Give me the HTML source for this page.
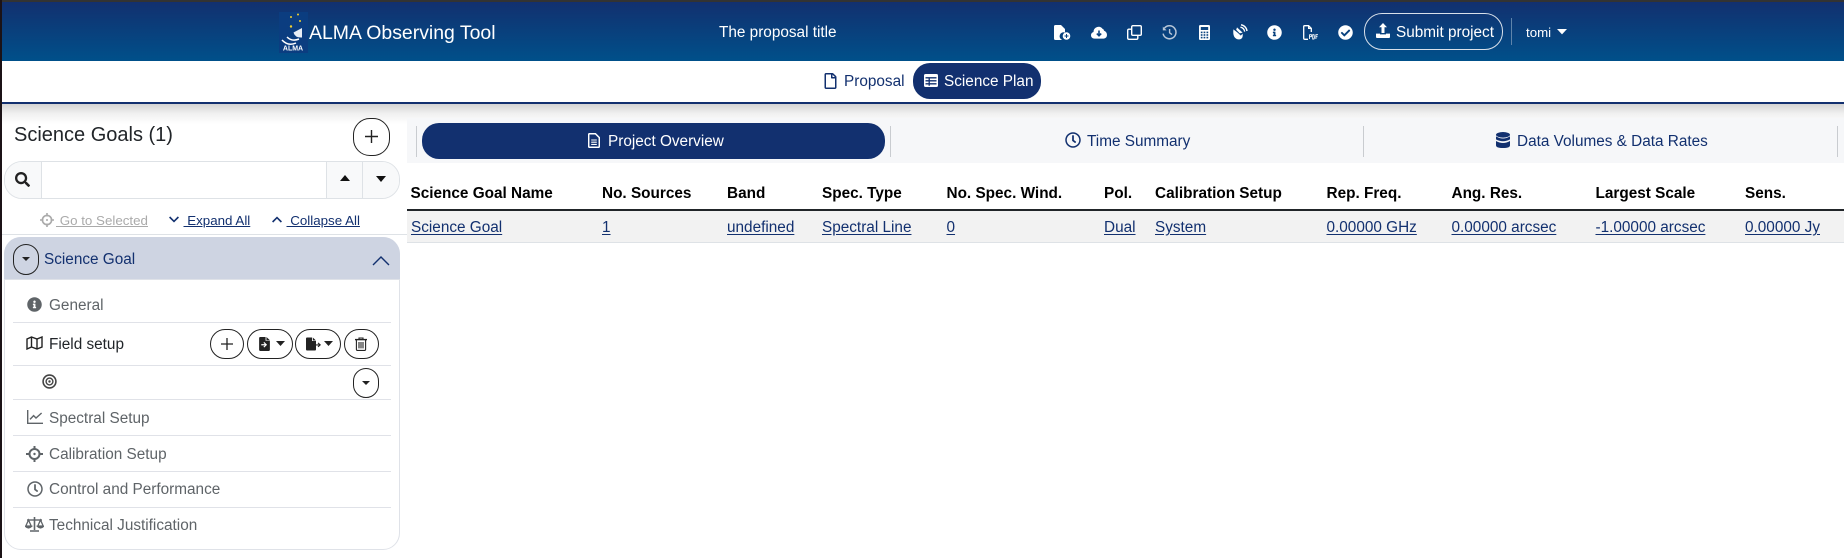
<!DOCTYPE html>
<html>
<head>
<meta charset="utf-8">
<style>
html,body{margin:0;padding:0;width:1844px;height:558px;overflow:hidden;background:#fff;font-family:"Liberation Sans",sans-serif;}
#p{position:relative;width:1844px;height:558px;overflow:hidden;background:#fff;}
.a{position:absolute;}
.t{position:absolute;white-space:nowrap;line-height:20px;font-size:15.33px;}
.w{color:#fff;}
.b{color:#12306f;}
.g{color:#5f6468;}
.th{font-weight:bold;color:#000;top:184px;}
.td{color:#12306f;top:218px;text-decoration:underline;text-underline-offset:2px;}
.l{font-size:13.35px;color:#12306f;top:211px;text-decoration:underline;}
.sep{position:absolute;left:13px;width:378px;height:1px;background:#e0e2e8;}
.btn{position:absolute;border:1px solid #222;border-radius:15px;box-sizing:border-box;background:#fff;}
svg{position:absolute;display:block;}
</style>
</head>
<body>
<div id="p">
<!-- header -->
<div class="a" style="left:0;top:2px;width:1844px;height:59px;background:linear-gradient(180deg,#12306f 0%,#00508a 100%);"></div>
<div class="a" style="left:0;top:0;width:1844px;height:2px;background:#333;"></div>

<!-- logo -->
<svg style="left:279px;top:12px" width="29" height="41" viewBox="0 0 29 41">
<rect width="29" height="41" fill="#0b3d80"/>
<circle cx="12" cy="5" r="1" fill="#f0d030"/><circle cx="19" cy="2.500" r="1" fill="#f0d030"/>
<circle cx="21" cy="9" r="1" fill="#f0d030"/><circle cx="12" cy="14.500" r="1.200" fill="#f0d030"/>
<path d="M23 16 L14.500 20.500 Q16 26 23 25.500 Z" fill="#e8eef6"/>
<path d="M8 25 Q13 30 20 27" stroke="#fff" stroke-width="1.500" fill="none"/>
<path d="M3 28 Q9 34.500 17 31" stroke="#fff" stroke-width="1.500" fill="none"/>
<text x="14" y="38.500" font-family="Liberation Sans" font-size="7" font-weight="bold" fill="#fff" text-anchor="middle">ALMA</text>
</svg>
<div class="t w" style="left:309px;top:22px;font-size:19.45px;line-height:22px;">ALMA Observing Tool</div>
<div class="t w" style="left:719px;top:23px;">The proposal title</div>

<!-- header icons -->
<svg style="left:1054px;top:25px" width="17" height="15" viewBox="0 0 17 15">
<path d="M0 1.500Q0 0 1.500 0H7L11 4V7.500A4 4 0 0 0 8.200 15H1.500Q0 15 0 13.500Z" fill="#fff"/>
<circle cx="12.500" cy="11" r="3.800" fill="#fff"/><path d="M10.500 11H14.500M12.500 9V13" stroke="#0c4480" stroke-width="1"/>
</svg>
<svg style="left:1091px;top:26px" width="16" height="13" viewBox="0 0 16 13">
<path d="M3.600 12.600Q0 12.400 0 9.200Q0 6.800 2.500 6Q2.600 2.200 6.200 1Q9.600 0 11.700 3Q12.600 2.800 13 4.600Q16 6 16 9Q15.800 12.400 12.600 12.600Z" fill="#fff"/>
<path d="M8 4.500V9.500M5.800 7.600L8 9.800L10.200 7.600" stroke="#0c4480" stroke-width="1.600" fill="none"/>
</svg>
<svg style="left:1127px;top:25px" width="15" height="15" viewBox="0 0 15 15" fill="none" stroke="#fff" stroke-width="1.400">
<rect x="4.700" y="0.700" width="9.600" height="9.600" rx="1.200"/>
<path d="M4.200 4.200H2Q0.700 4.200 0.700 5.500V13Q0.700 14.300 2 14.300H9.500Q10.800 14.300 10.800 13V10.800"/>
</svg>
<svg style="left:1162px;top:25px" width="15" height="15" viewBox="0 0 15 15" fill="none" stroke="#b8c6d8" stroke-width="1.500">
<path d="M2.400 3.200A6.500 6.500 0 1 1 1.100 8.600"/><path d="M0.800 1.600L4.600 5.400H0.800Z" fill="#b8c6d8" stroke="none"/>
<path d="M7.600 4V7.800L10 9.600" stroke-width="1.400"/>
</svg>
<svg style="left:1199px;top:25px" width="11" height="15" viewBox="0 0 11 15">
<rect width="11" height="15" rx="1.400" fill="#fff"/>
<rect x="1.800" y="2" width="7.400" height="3" fill="#0c4480"/>
<g fill="#0c4480"><rect x="1.800" y="6.600" width="1.700" height="1.600"/><rect x="4.600" y="6.600" width="1.700" height="1.600"/><rect x="7.500" y="6.600" width="1.700" height="1.600"/><rect x="1.800" y="9.200" width="1.700" height="1.600"/><rect x="4.600" y="9.200" width="1.700" height="1.600"/><rect x="7.500" y="9.200" width="1.700" height="1.600"/><rect x="1.800" y="11.800" width="1.700" height="1.600"/><rect x="4.600" y="11.800" width="1.700" height="1.600"/><rect x="7.500" y="11.800" width="1.700" height="1.600"/></g>
</svg>
<svg style="left:1232px;top:24px" width="16" height="16" viewBox="0 0 16 16">
<path d="M1.400 5.400L5.600 8.600L8.800 11.600L10.600 9.600Q11.600 15.600 6 15.400Q0.400 14.200 1.400 5.400Z" fill="#fff"/>
<path d="M5 3.400L10.600 8.600L7.800 9.400L4.200 5.800Z" fill="#fff"/>
<path d="M8.400 3.200A4.600 4.600 0 0 1 12.600 7.600M9 0.800A7 7 0 0 1 15 7" stroke="#fff" stroke-width="1.400" fill="none"/>
</svg>
<svg style="left:1267px;top:25px" width="15" height="15" viewBox="0 0 512 512">
<path fill="#fff" d="M256 8C119.043 8 8 119.083 8 256c0 136.997 111.043 248 248 248s248-111.003 248-248C504 119.083 392.957 8 256 8zm0 110c23.196 0 42 18.804 42 42s-18.804 42-42 42-42-18.804-42-42 18.804-42 42-42zm56 254c0 6.627-5.373 12-12 12h-88c-6.627 0-12-5.373-12-12v-24c0-6.627 5.373-12 12-12h12v-64h-12c-6.627 0-12-5.373-12-12v-24c0-6.627 5.373-12 12-12h64c6.627 0 12 5.373 12 12v100h12c6.627 0 12 5.373 12 12v24z"/>
</svg>
<svg style="left:1303px;top:25px" width="15" height="15" viewBox="0 0 15 15">
<path d="M0.700 1.700Q0.700 0.700 1.700 0.700H5.600L8.300 3.400V7M0.700 1.700V13.300Q0.700 14.300 1.700 14.300H5" stroke="#fff" stroke-width="1.300" fill="none"/>
<path d="M5.600 0.700V3.400H8.300" stroke="#fff" stroke-width="1.200" fill="none"/>
<path d="M6.500 9.500V14M6.500 9.700H8.400V11.700H6.500M9.700 9.700V14H11Q11.800 13 11 9.700ZM12.900 14V9.700H15M12.900 11.700H14.500" stroke="#fff" stroke-width=".9" fill="none"/>
</svg>
<svg style="left:1338px;top:25px" width="15" height="15" viewBox="0 0 512 512">
<path fill="#fff" d="M504 256c0 136.967-111.033 248-248 248S8 392.967 8 256 119.033 8 256 8s248 111.033 248 248zM227.314 387.314l184-184c6.248-6.248 6.248-16.379 0-22.627l-22.627-22.627c-6.248-6.249-16.379-6.249-22.628 0L216 308.118l-70.059-70.059c-6.248-6.248-16.379-6.248-22.628 0l-22.627 22.627c-6.248 6.248-6.248 16.379 0 22.627l104 104c6.249 6.249 16.379 6.249 22.628.001z"/>
</svg>

<!-- submit -->
<div class="a" style="left:1364px;top:13px;width:139px;height:37px;box-sizing:border-box;border:1px solid #d8e0ea;border-radius:18px;"></div>
<svg style="left:1376px;top:23px" width="14" height="15" viewBox="0 0 14 15">
<path d="M7 0L11 4.200H8.500V10H5.500V4.200H3Z" fill="#fff"/>
<path d="M0 10.600H4V11.400H10V10.600H14V14Q14 15 13 15H1Q0 15 0 14Z" fill="#fff"/>
</svg>
<div class="t w" style="left:1396px;top:23px;">Submit project</div>
<div class="a" style="left:1511px;top:18px;width:1px;height:27px;background:#5f84ab;"></div>
<div class="t w" style="left:1526px;top:23px;font-size:13.3px;">tomi</div>
<svg style="left:1557px;top:29px" width="10" height="6" viewBox="0 0 10 6"><path d="M0 0H10L5 5.400Z" fill="#fff"/></svg>

<!-- nav -->
<div class="a" style="left:0;top:102px;width:1844px;height:2px;background:#12306f;"></div>
<svg style="left:824px;top:72.500px" width="13" height="16" viewBox="0 0 384 512">
<path fill="#12306f" d="M369.900 97.900L286 14C277 5 264.800-.1 252.100-.1H48C21.500 0 0 21.500 0 48v416c0 26.500 21.500 48 48 48h288c26.500 0 48-21.500 48-48V131.900c0-12.700-5.100-25-14.100-34zM332.100 128H256V51.900l76.100 76.100zM48 464V48h160v104c0 13.300 10.700 24 24 24h104v288H48z"/>
</svg>
<div class="t b" style="left:844px;top:72px;">Proposal</div>
<div class="a" style="left:913px;top:63px;width:128px;height:36px;background:#12306f;border-radius:17px;"></div>
<svg style="left:924px;top:74px" width="14" height="13" viewBox="0 0 14 13">
<rect width="14" height="13" rx="1.600" fill="#fff"/>
<path d="M1.500 3.800H12.500M1.500 6.800H12.500M1.500 9.800H12.500M5.200 3.500V11.800" stroke="#12306f" stroke-width="1.300"/>
</svg>
<div class="t w" style="left:944px;top:72px;">Science Plan</div>

<!-- shadow -->
<div class="a" style="left:0;top:104px;width:1844px;height:20px;background:linear-gradient(180deg,#d4d4d4 0%,#efefef 45%,#fff 100%);"></div>

<!-- left strip -->
<div class="a" style="left:0;top:0;width:2px;height:558px;background:#1b1216;"></div>

<!-- sidebar header -->
<div class="t" style="left:14px;top:123px;font-size:20px;line-height:24px;color:#212529;">Science Goals (1)</div>
<div class="btn" style="left:353px;top:118px;width:37px;height:38px;border-radius:17px;"></div>
<svg style="left:364px;top:129px" width="15" height="15" viewBox="0 0 15 15"><path d="M7.500 1V14M1 7.500H14" stroke="#222" stroke-width="1.400"/></svg>

<!-- search -->
<div class="a" style="left:4px;top:161px;width:396px;height:38px;box-sizing:border-box;border:1px solid #dee2e6;border-radius:18px;background:#fff;overflow:hidden;">
<div class="a" style="left:0;top:0;width:36px;height:36px;background:#f8f9fa;border-right:1px solid #dee2e6;"></div>
<div class="a" style="left:321px;top:0;width:36px;height:36px;background:#f8f9fa;border-left:1px solid #dee2e6;"></div>
<div class="a" style="left:357px;top:0;width:38px;height:36px;background:#f8f9fa;border-left:1px solid #dee2e6;"></div>
</div>
<svg style="left:14.500px;top:172px" width="15" height="15" viewBox="0 0 512 512">
<path fill="#222" d="M505 442.700L405.300 343c-4.500-4.500-10.600-7-17-7H372c27.600-35.300 44-79.700 44-128C416 93.100 322.900 0 208 0S0 93.100 0 208s93.100 208 208 208c48.300 0 92.700-16.400 128-44v16.300c0 6.400 2.500 12.500 7 17l99.700 99.700c9.400 9.400 24.600 9.400 33.900 0l28.300-28.300c9.400-9.400 9.400-24.600.1-34zM208 336c-70.700 0-128-57.200-128-128 0-70.700 57.200-128 128-128 70.700 0 128 57.200 128 128 0 70.700-57.200 128-128 128z"/>
</svg>
<svg style="left:340px;top:175px" width="10" height="6" viewBox="0 0 10 6"><path d="M0 6H10L5 0Z" fill="#111"/></svg>
<svg style="left:376px;top:176px" width="10" height="6" viewBox="0 0 10 6"><path d="M0 0H10L5 6Z" fill="#111"/></svg>

<!-- links -->
<svg style="left:40px;top:213px" width="14" height="14" viewBox="0 0 14 14" fill="none" stroke="#aaa" stroke-width="1.600"><circle cx="7" cy="7" r="4.600"/><circle cx="7" cy="7" r="1" fill="#aaa" stroke="none"/><path d="M7 0V3.500M7 10.500V14M0 7H3.500M10.500 7H14"/></svg>
<div class="t l" style="left:56px;color:#aaa;">&nbsp;Go to Selected</div>
<svg style="left:169px;top:216px" width="10" height="7" viewBox="0 0 10 7" fill="none" stroke="#12306f" stroke-width="1.600"><path d="M0.600 1L5 5.400L9.400 1"/></svg>
<div class="t l" style="left:183.500px;">&nbsp;Expand All</div>
<svg style="left:272px;top:216px" width="10" height="7" viewBox="0 0 10 7" fill="none" stroke="#12306f" stroke-width="1.600"><path d="M0.600 6L5 1.600L9.400 6"/></svg>
<div class="t l" style="left:286.500px;">&nbsp;Collapse All</div>
<div class="a" style="left:2px;top:234px;width:405px;height:1px;background:#dee2e6;"></div>

<!-- accordion -->
<div class="a" style="left:4px;top:237px;width:396px;height:313px;box-sizing:border-box;border:1px solid #dfe2e8;border-radius:17px;background:#fff;"></div>
<div class="a" style="left:4px;top:237px;width:396px;height:43px;background:#ced4e2;border-radius:17px 17px 0 0;box-sizing:border-box;border-bottom:1px solid #dfe2e8;"></div>
<div class="a" style="left:13px;top:244px;width:26px;height:31px;box-sizing:border-box;border:1px solid #222;border-radius:13px;"></div>
<svg style="left:22px;top:257px" width="8" height="4" viewBox="0 0 8 4"><path d="M0 0H8L4 4Z" fill="#222"/></svg>
<div class="t b" style="left:44px;top:250px;">Science Goal</div>
<svg style="left:372px;top:256px" width="18" height="10" viewBox="0 0 18 10" fill="none" stroke="#12306f" stroke-width="1.400"><path d="M1 9L9 1L17 9"/></svg>

<!-- rows -->
<svg style="left:27px;top:297px" width="15" height="15" viewBox="0 0 512 512">
<path fill="#5f6468" d="M256 8C119.043 8 8 119.083 8 256c0 136.997 111.043 248 248 248s248-111.003 248-248C504 119.083 392.957 8 256 8zm0 110c23.196 0 42 18.804 42 42s-18.804 42-42 42-42-18.804-42-42 18.804-42 42-42zm56 254c0 6.627-5.373 12-12 12h-88c-6.627 0-12-5.373-12-12v-24c0-6.627 5.373-12 12-12h12v-64h-12c-6.627 0-12-5.373-12-12v-24c0-6.627 5.373-12 12-12h64c6.627 0 12 5.373 12 12v100h12c6.627 0 12 5.373 12 12v24z"/>
</svg>
<div class="t g" style="left:49px;top:296px;">General</div>
<div class="sep" style="top:322px;"></div>

<svg style="left:26px;top:336px" width="17" height="14" viewBox="0 0 17 14" fill="none" stroke="#222" stroke-width="1.400"><path d="M1 3L5.500 1L11 3L16 1V11L11 13L5.500 11L1 13ZM5.500 1V11M11 3V13"/></svg>
<div class="t" style="left:49px;top:335px;color:#212529;">Field setup</div>

<div class="btn" style="left:210px;top:329px;width:34px;height:30px;"></div>
<svg style="left:221px;top:338px" width="12" height="12" viewBox="0 0 12 12"><path d="M6 0V12M0 6H12" stroke="#222" stroke-width="1.300"/></svg>
<div class="btn" style="left:247px;top:329px;width:46px;height:30px;"></div>
<svg style="left:259px;top:337px" width="11" height="14" viewBox="0 0 10 13"><path d="M0 1Q0 0 1 0H6V3.500H10V12Q10 13 9 13H1Q0 13 0 12ZM6.800 0L10 3H6.800Z" fill="#222"/><path d="M2 7.200H6M4.400 5L6.600 7.200L4.400 9.400" stroke="#fff" stroke-width="1.100" fill="none"/></svg>
<svg style="left:276px;top:341px" width="9" height="5" viewBox="0 0 9 5"><path d="M0 0H9L4.500 5Z" fill="#222"/></svg>
<div class="btn" style="left:295px;top:329px;width:46px;height:30px;"></div>
<svg style="left:306px;top:337px" width="15" height="14" viewBox="0 0 15 13"><path d="M0 1Q0 0 1 0H6V3.500H10V12Q10 13 9 13H1Q0 13 0 12ZM6.800 0L10 3H6.800Z" fill="#222"/><path d="M10 7.400H13.500M12 5.400L14.200 7.400L12 9.400" stroke="#222" stroke-width="1.100" fill="none"/></svg>
<svg style="left:324px;top:341px" width="9" height="5" viewBox="0 0 9 5"><path d="M0 0H9L4.500 5Z" fill="#222"/></svg>
<div class="btn" style="left:344px;top:329px;width:35px;height:30px;"></div>
<svg style="left:355px;top:337px" width="12" height="14" viewBox="0 0 12 14" fill="none" stroke="#222" stroke-width="1.100"><path d="M0 2.600H12" stroke-width="1.400"/><path d="M4 2.400V1H8V2.400"/><path d="M1.400 3V12.400Q1.400 13.400 2.400 13.400H9.600Q10.600 13.400 10.600 12.400V3"/><path d="M4 5V11.400M6 5V11.400M8 5V11.400"/></svg>
<div class="sep" style="top:365px;"></div>

<svg style="left:42px;top:374px" width="15" height="15" viewBox="0 0 15 15" fill="none" stroke="#444"><circle cx="7.500" cy="7.500" r="6.400" stroke-width="1.600"/><circle cx="7.500" cy="7.500" r="3.400" stroke-width="1.400"/><circle cx="7.500" cy="7.500" r="1.200" fill="#444" stroke="none"/></svg>
<div class="btn" style="left:353px;top:368px;width:26px;height:30px;border-radius:13px;"></div>
<svg style="left:362px;top:381px" width="8" height="4" viewBox="0 0 8 4"><path d="M0 0H8L4 4Z" fill="#222"/></svg>
<div class="sep" style="top:399px;"></div>

<svg style="left:27px;top:410px" width="16" height="14" viewBox="0 0 16 14" fill="none" stroke="#5f6468" stroke-width="1.400"><path d="M0.700 0V13.300H16"/><path d="M3 9.400L6.600 5.600L9 8L14.600 3"/></svg>
<div class="t g" style="left:49px;top:409px;">Spectral Setup</div>
<div class="sep" style="top:435px;"></div>

<svg style="left:26px;top:446px" width="17" height="16" viewBox="0 0 17 16" fill="none" stroke="#5f6468" stroke-width="2"><circle cx="8.500" cy="8" r="5"/><circle cx="8.500" cy="8" r="1.200" fill="#5f6468" stroke="none"/><path d="M8.500 0V3.400M8.500 12.600V16M0 8H3.500M13.500 8H17"/></svg>
<div class="t g" style="left:49px;top:445px;">Calibration Setup</div>
<div class="sep" style="top:471px;"></div>

<svg style="left:27px;top:481px" width="16" height="16" viewBox="0 0 512 512">
<path fill="#5f6468" d="M256 8C119 8 8 119 8 256s111 248 248 248 248-111 248-248S393 8 256 8zm0 448c-110.500 0-200-89.500-200-200S145.500 56 256 56s200 89.500 200 200-89.500 200-200 200zm61.800-104.400l-84.900-61.700c-3.100-2.300-4.900-5.900-4.900-9.700V116c0-6.600 5.400-12 12-12h32c6.600 0 12 5.400 12 12v141.700l66.800 48.600c5.400 3.900 6.500 11.400 2.600 16.800L334.600 349c-3.900 5.300-11.400 6.500-16.800 2.600z"/>
</svg>
<div class="t g" style="left:49px;top:480px;">Control and Performance</div>
<div class="sep" style="top:507px;"></div>

<svg style="left:25px;top:517px" width="19" height="15" viewBox="0 0 19 15" fill="none" stroke="#5f6468" stroke-width="1.300"><path d="M9.500 0V13M5 14H14" stroke-width="1.600"/><path d="M2 3H17" stroke-width="1.400"/><path d="M3.500 3L0.800 9H6.200ZM15.500 3L12.800 9H18.200Z"/><path d="M0.500 9.400Q3.500 12.400 6.500 9.400ZM12.500 9.400Q15.500 12.400 18.500 9.400Z" fill="#5f6468"/></svg>
<div class="t g" style="left:49px;top:516px;">Technical Justification</div>

<!-- tabs -->
<div class="a" style="left:407px;top:118px;width:1437px;height:45px;background:#f6f7f9;"></div>
<div class="a" style="left:416px;top:126px;width:1px;height:31px;background:#c9ccd0;"></div>
<div class="a" style="left:890px;top:126px;width:1px;height:31px;background:#c9ccd0;"></div>
<div class="a" style="left:1363px;top:126px;width:1px;height:31px;background:#c9ccd0;"></div>
<div class="a" style="left:1837px;top:126px;width:1px;height:31px;background:#c9ccd0;"></div>
<div class="a" style="left:422px;top:123px;width:463px;height:36px;background:#12306f;border-radius:17px;"></div>
<svg style="left:588px;top:133px" width="12" height="15" viewBox="0 0 12 15" fill="none" stroke="#fff" stroke-width="1.500"><path d="M0.700 1.600Q0.700 0.700 1.600 0.700H7.400L11.300 4.600V13.400Q11.300 14.300 10.400 14.300H1.600Q0.700 14.300 0.700 13.400Z"/><path d="M3.200 7H8.800M3.200 9.200H8.800M3.200 11.400H8.800" stroke-width="1.100"/></svg>
<div class="t w" style="left:608px;top:132px;">Project Overview</div>
<svg style="left:1065px;top:132px" width="16" height="16" viewBox="0 0 512 512">
<path fill="#12306f" d="M256 8C119 8 8 119 8 256s111 248 248 248 248-111 248-248S393 8 256 8zm0 448c-110.500 0-200-89.500-200-200S145.500 56 256 56s200 89.500 200 200-89.500 200-200 200zm61.800-104.400l-84.900-61.700c-3.100-2.300-4.900-5.900-4.900-9.700V116c0-6.600 5.400-12 12-12h32c6.600 0 12 5.400 12 12v141.700l66.800 48.600c5.400 3.900 6.500 11.400 2.600 16.800L334.600 349c-3.900 5.300-11.400 6.500-16.800 2.600z"/>
</svg>
<div class="t b" style="left:1087px;top:132px;">Time Summary</div>
<svg style="left:1496px;top:132px" width="14" height="16" viewBox="0 0 14 16" fill="#12306f">
<ellipse cx="7" cy="2.800" rx="7" ry="2.800"/><path d="M0 4.400Q7 8.600 14 4.400V7.400Q7 11.200 0 7.400Z"/><path d="M0 9Q7 13 14 9V13.200Q14 16 7 16Q0 16 0 13.200Z"/>
</svg>
<div class="t b" style="left:1517px;top:132px;">Data Volumes &amp; Data Rates</div>

<!-- table -->
<div class="t th" style="left:410.500px;">Science Goal Name</div>
<div class="t th" style="left:602px;">No. Sources</div>
<div class="t th" style="left:727px;">Band</div>
<div class="t th" style="left:822px;">Spec. Type</div>
<div class="t th" style="left:946.500px;">No. Spec. Wind.</div>
<div class="t th" style="left:1104px;">Pol.</div>
<div class="t th" style="left:1155px;">Calibration Setup</div>
<div class="t th" style="left:1326.500px;">Rep. Freq.</div>
<div class="t th" style="left:1451.500px;">Ang. Res.</div>
<div class="t th" style="left:1595.500px;">Largest Scale</div>
<div class="t th" style="left:1745px;">Sens.</div>
<div class="a" style="left:407px;top:209px;width:1437px;height:2px;background:#212529;"></div>
<div class="a" style="left:407px;top:211px;width:1437px;height:32px;box-sizing:border-box;background:#f2f2f2;border-bottom:1px solid #dee2e6;"></div>
<div class="t td" style="left:411px;">Science Goal</div>
<div class="t td" style="left:602px;">1</div>
<div class="t td" style="left:727px;">undefined</div>
<div class="t td" style="left:822px;">Spectral Line</div>
<div class="t td" style="left:946.500px;">0</div>
<div class="t td" style="left:1104px;">Dual</div>
<div class="t td" style="left:1155px;">System</div>
<div class="t td" style="left:1326.500px;">0.00000 GHz</div>
<div class="t td" style="left:1451.500px;">0.00000 arcsec</div>
<div class="t td" style="left:1595.500px;">-1.00000 arcsec</div>
<div class="t td" style="left:1745px;">0.00000 Jy</div>
</div>
</body>
</html>
